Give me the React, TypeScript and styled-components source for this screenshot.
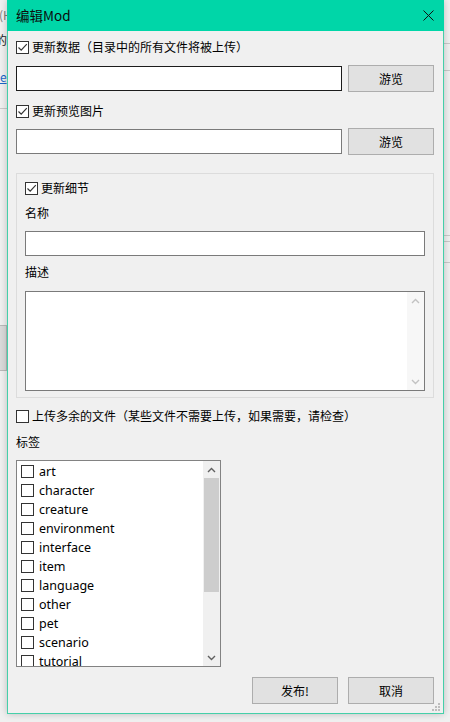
import styled, { createGlobalStyle } from 'styled-components';

const GlobalStyle = createGlobalStyle`
  html, body {
    margin: 0;
    padding: 0;
    background: #f0f0f0;
    overflow: hidden;
  }
  * {
    box-sizing: border-box;
  }
`;

const TAGS = [
  'art',
  'character',
  'creature',
  'environment',
  'interface',
  'item',
  'language',
  'other',
  'pet',
  'scenario',
  'tutorial',
];

const CheckMark = () => (
  <svg width="11" height="11" viewBox="0 0 11 11">
    <polyline points="1.5,5.5 4.2,8.2 9.8,2.2" fill="none" stroke="#333" strokeWidth="1.2" />
  </svg>
);

const Chevron = ({ down, color }: { down?: boolean; color: string }) => (
  <svg width="9" height="6" viewBox="0 0 9 6">
    <polyline
      points={down ? '1,1 4.5,4.5 8,1' : '1,5 4.5,1.5 8,5'}
      fill="none"
      stroke={color}
      strokeWidth="1.4"
    />
  </svg>
);

const Check = ({ checked }: { checked?: boolean }) => (
  <CheckBox>{checked && <CheckMark />}</CheckBox>
);

const App = () => {
  return (
    <Desktop>
      <GlobalStyle />
      <Backdrop>
        <Fragment $top={7} $left={-1} $color="#7a7a7a">
          (H
        </Fragment>
        <Fragment $top={32} $left={-5} $color="#222">
          的
        </Fragment>
        <Fragment $top={69} $left={0} $color="#1a66c8" $underline>
          e
        </Fragment>
        <Rule $top={108} $left={0} $width={8} />
        <Block $top={325} $left={-10} />
        <Rule $top={43} $left={443} $width={8} />
        <Rule $top={70} $left={443} $width={8} />
        <Rule $top={235} $left={443} $width={8} />
        <Rule $top={241} $left={443} $width={8} />
        <Rule $top={262} $left={443} $width={8} />
      </Backdrop>

      <Window>
        <TitleBar>
          <Title>编辑Mod</Title>
          <CloseButton>
            <svg width="11" height="11" viewBox="0 0 11 11">
              <path d="M0.5 0.5 L10.5 10.5 M10.5 0.5 L0.5 10.5" stroke="#111" strokeWidth="1" />
            </svg>
          </CloseButton>
        </TitleBar>

        <Client>
          <CheckRow $mt={8}>
            <Check checked />
            <Label>更新数据（目录中的所有文件将被上传）</Label>
          </CheckRow>
          <PathRow $mt={10}>
            <TextBox $focused />
            <Button>游览</Button>
          </PathRow>

          <CheckRow $mt={11}>
            <Check checked />
            <Label>更新预览图片</Label>
          </CheckRow>
          <PathRow $mt={9}>
            <TextBox />
            <Button>游览</Button>
          </PathRow>

          <GroupBox>
            <CheckRow $mt={0}>
              <Check checked />
              <Label>更新细节</Label>
            </CheckRow>
            <FieldLabel $mt={9}>名称</FieldLabel>
            <NameBox />
            <FieldLabel $mt={8}>描述</FieldLabel>
            <TextArea>
              <AreaBody />
              <AreaScroll>
                <ArrowCell>
                  <Chevron color="#c2c2c2" />
                </ArrowCell>
                <ArrowCell>
                  <Chevron down color="#c2c2c2" />
                </ArrowCell>
              </AreaScroll>
            </TextArea>
          </GroupBox>

          <CheckRow $mt={10}>
            <Check />
            <Label>上传多余的文件（某些文件不需要上传，如果需要，请检查）</Label>
          </CheckRow>
          <FieldLabel $mt={10}>标签</FieldLabel>

          <TagList>
            <TagItems>
              {TAGS.map((tag) => (
                <TagRow key={tag}>
                  <Check />
                  <TagText>{tag}</TagText>
                </TagRow>
              ))}
            </TagItems>
            <ListScroll>
              <ArrowCell>
                <Chevron color="#606060" />
              </ArrowCell>
              <Track>
                <Thumb />
              </Track>
              <ArrowCell>
                <Chevron down color="#606060" />
              </ArrowCell>
            </ListScroll>
          </TagList>

          <Actions>
            <Button>发布!</Button>
            <Button>取消</Button>
          </Actions>
        </Client>

        <Grip>
          <svg width="10" height="8" viewBox="0 0 10 8">
            {[
              [8, 0],
              [8, 3],
              [5, 3],
              [8, 6],
              [5, 6],
              [2, 6],
            ].map(([x, y]) => (
              <rect key={`${x}-${y}`} x={x} y={y} width="2" height="2" fill="#bdbdbd" />
            ))}
          </svg>
        </Grip>
      </Window>
    </Desktop>
  );
};

const uiFont = `"Noto Sans CJK SC", "Noto Sans", sans-serif`;

const Desktop = styled.div`
  position: relative;
  width: 450px;
  height: 722px;
  overflow: hidden;
  padding-left: 7px;
  background: #f0f0f0;
  font-family: ${uiFont};
`;

const Backdrop = styled.div`
  position: absolute;
  inset: 0;
`;

const Fragment = styled.span<{ $top: number; $left: number; $color: string; $underline?: boolean }>`
  position: absolute;
  top: ${(p) => p.$top}px;
  left: ${(p) => p.$left}px;
  font-size: 12px;
  line-height: 16px;
  color: ${(p) => p.$color};
  text-decoration: ${(p) => (p.$underline ? 'underline' : 'none')};
`;

const Rule = styled.div<{ $top: number; $left: number; $width: number }>`
  position: absolute;
  top: ${(p) => p.$top}px;
  left: ${(p) => p.$left}px;
  width: ${(p) => p.$width}px;
  height: 1px;
  background: #c9c9c9;
`;

const Block = styled.div<{ $top: number; $left: number }>`
  position: absolute;
  top: ${(p) => p.$top}px;
  left: ${(p) => p.$left}px;
  width: 17px;
  height: 46px;
  background: #dadada;
  border: 1px solid #b9b9b9;
`;

const Window = styled.div`
  position: relative;
  width: 437px;
  height: 714px;
  display: flex;
  flex-direction: column;
  background: #f0f0f0;
  border: 1px solid #45cfa9;
  border-top: none;
  box-shadow: 0 0 7px rgba(0, 0, 0, 0.22);
`;

const TitleBar = styled.div`
  height: 31px;
  margin: 0 -1px;
  display: flex;
  align-items: center;
  justify-content: space-between;
  background: #00d6a8;
`;

const Title = styled.div`
  padding-left: 9px;
  font-size: 13.5px;
  color: #0c0c0c;
  line-height: 31px;
`;

const CloseButton = styled.div`
  width: 31px;
  height: 31px;
  display: flex;
  align-items: center;
  justify-content: center;
`;

const Client = styled.div`
  flex: 1;
  display: flex;
  flex-direction: column;
  padding: 0 9px 9px 8px;
`;

const CheckRow = styled.div<{ $mt: number }>`
  display: flex;
  align-items: center;
  gap: 3px;
  height: 16px;
  margin-top: ${(p) => p.$mt}px;
`;

const CheckBox = styled.div`
  width: 13px;
  height: 13px;
  flex: none;
  display: flex;
  align-items: center;
  justify-content: center;
  border: 1px solid #333;
  background: #fff;
`;

const Label = styled.span`
  font-size: 12px;
  line-height: 16px;
  color: #000;
  white-space: nowrap;
`;

const FieldLabel = styled.div<{ $mt: number }>`
  margin-top: ${(p) => p.$mt}px;
  font-size: 12px;
  line-height: 16px;
  height: 16px;
  color: #000;
`;

const PathRow = styled.div<{ $mt: number }>`
  display: flex;
  align-items: center;
  justify-content: space-between;
  height: 27px;
  margin-top: ${(p) => p.$mt}px;
`;

const TextBox = styled.div<{ $focused?: boolean }>`
  width: 326px;
  height: 25px;
  background: #fff;
  border: 1px solid ${(p) => (p.$focused ? '#1c1c1c' : '#7a7a7a')};
`;

const Button = styled.div`
  width: 86px;
  height: 27px;
  display: flex;
  align-items: center;
  justify-content: center;
  background: #e1e1e1;
  border: 1px solid #adadad;
  font-size: 12px;
  color: #000;
`;

const GroupBox = styled.div`
  margin-top: 18px;
  height: 225px;
  display: flex;
  flex-direction: column;
  padding: 6px 8px 6px 8px;
  border: 1px solid #dcdcdc;
`;

const NameBox = styled.div`
  margin-top: 10px;
  height: 25px;
  background: #fff;
  border: 1px solid #7a7a7a;
`;

const TextArea = styled.div`
  margin-top: 11px;
  height: 100px;
  display: flex;
  background: #fff;
  border: 1px solid #7a7a7a;
`;

const AreaBody = styled.div`
  flex: 1;
`;

const AreaScroll = styled.div`
  width: 17px;
  display: flex;
  flex-direction: column;
  justify-content: space-between;
  background: #f7f7f7;
`;

const ArrowCell = styled.div`
  width: 17px;
  height: 17px;
  flex: none;
  display: flex;
  align-items: center;
  justify-content: center;
`;

const TagList = styled.div`
  margin-top: 10px;
  width: 205px;
  height: 207px;
  display: flex;
  background: #fff;
  border: 1px solid #828282;
`;

const TagItems = styled.div`
  flex: 1;
  overflow: hidden;
  padding: 1px 0 0 4px;
`;

const TagRow = styled.div`
  height: 19px;
  display: flex;
  align-items: center;
  gap: 5px;
`;

const TagText = styled.span`
  font-family: "Noto Sans", sans-serif;
  font-size: 12.5px;
  line-height: 19px;
  color: #000;
`;

const ListScroll = styled.div`
  width: 17px;
  display: flex;
  flex-direction: column;
  background: #f0f0f0;
`;

const Track = styled.div`
  flex: 1;
  padding: 0 1px;
`;

const Thumb = styled.div`
  height: 114px;
  background: #cdcdcd;
`;

const Actions = styled.div`
  margin-top: 10px;
  display: flex;
  justify-content: flex-end;
  gap: 10px;
`;

const Grip = styled.div`
  position: absolute;
  right: 3px;
  bottom: 2px;
  line-height: 0;
`;

export default App;
